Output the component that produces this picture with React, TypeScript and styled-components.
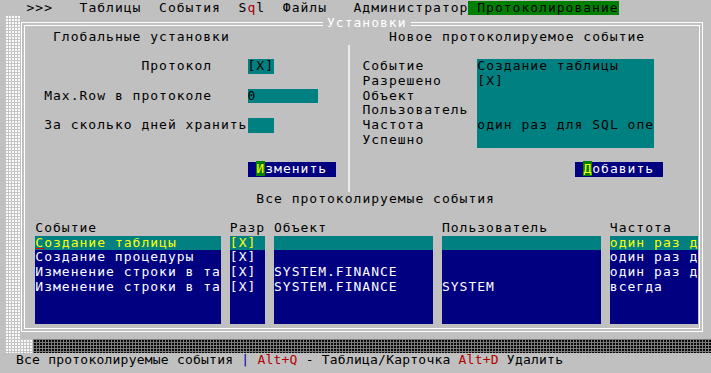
import React from "react";
import styled, { createGlobalStyle, css } from "styled-components";

// text-mode screen: every glyph sits in a cell of CW x RH pixels
const CW = 8.84;
const RH = 14.7;
const cols = (n: number) => `${(n * CW).toFixed(2)}px`;
const rows = (n: number) => `${(n * RH).toFixed(2)}px`;

const GlobalStyle = createGlobalStyle`
  html, body {
    margin: 0;
    padding: 0;
    background: #c0c0c0;
    overflow: hidden;
  }
`;

const lightDither = css`
  background-color: #fafafa;
  background-image: linear-gradient(to right, #c4c4c4 1px, transparent 1px),
    linear-gradient(to bottom, #c4c4c4 1px, transparent 1px);
  background-size: 3px 3px;
`;

const darkDither = css`
  background-color: #080808;
  background-image: linear-gradient(to right, #7c7c7c 1px, transparent 1px),
    linear-gradient(to bottom, #7c7c7c 1px, transparent 1px);
  background-size: 3px 3px;
`;

const Screen = styled.div`
  width: 711px;
  height: 373px;
  box-sizing: border-box;
  padding-top: 0.65px;
  background: #c0c0c0;
  color: #000;
  font-family: "DejaVu Sans Mono", "Liberation Mono", monospace;
  font-size: 13px;
  letter-spacing: 1.01px;
  line-height: ${RH}px;
  white-space: pre;
  overflow: hidden;
`;

const MenuBar = styled.div`
  display: flex;
  height: ${RH}px;
  padding-left: ${cols(3)};
`;

const MenuItem = styled.span<{ $gap: number; $active?: boolean }>`
  margin-right: ${(p) => cols(p.$gap)};
  ${(p) =>
    p.$active &&
    css`
      background: #008000;
    `}
`;

const Hot = styled.span`
  color: #a80000;
`;

const Desk = styled.div`
  display: flex;
  align-items: flex-start;
  height: ${(338.75 - 15.35).toFixed(2)}px;
`;

const SideShade = styled.div`
  align-self: stretch;
  width: 15px;
  margin-left: 5px;
  ${lightDither}
`;

const Window = styled.div`
  position: relative;
  width: 682px;
  box-sizing: border-box;
  margin: 6.65px 0 0 1px;
  border: 4px double #fff;
`;

const WindowTitle = styled.div`
  position: absolute;
  top: -10px;
  left: 298px;
  padding: 0 4px;
  background: #c0c0c0;
  color: #fff;
`;

const Content = styled.div`
  margin: 4.05px 0 0 1.52px;
  padding-bottom: 4.25px;
`;

const TopSection = styled.div`
  display: grid;
  grid-template-columns: ${cols(36)} ${cols(1)} 1fr;
  height: ${rows(11)};
`;

const Panel = styled.div`
  display: flex;
  flex-direction: column;
`;

const Line = styled.div<{ $indent?: number }>`
  height: ${RH}px;
  padding-left: ${(p) => cols(p.$indent ?? 0)};
  overflow: hidden;
`;

const FormRow = styled.div`
  display: flex;
  height: ${RH}px;
  margin-top: ${RH}px;
`;

const FormLabel = styled.div<{ $indent: number }>`
  width: ${cols(25)};
  box-sizing: border-box;
  padding-left: ${(p) => cols(p.$indent)};
`;

const Field = styled.div<{ $cols: number }>`
  width: ${(p) => cols(p.$cols)};
  background: #008080;
  overflow: hidden;
`;

const ButtonRow = styled.div<{ $indent: number; $skip: number }>`
  height: ${RH}px;
  margin-top: ${(p) => rows(p.$skip)};
  padding-left: ${(p) => cols(p.$indent)};
`;

const Button = styled.span`
  display: inline-block;
  width: ${cols(10)};
  background: #000080;
  color: #fff;
`;

const ButtonKey = styled.span`
  background: #008000;
  color: #ffff00;
`;

const Divider = styled.div`
  justify-self: center;
  width: 2px;
  margin-top: ${RH}px;
  background: #ececec;
`;

const Details = styled.div`
  display: flex;
  margin-top: ${RH}px;
`;

const DetailLabels = styled.div`
  width: ${cols(14)};
  box-sizing: border-box;
  padding-left: ${cols(1)};
`;

const DetailBox = styled.div`
  width: ${cols(20)};
  height: ${rows(6)};
  background: #008080;
`;

const Table = styled.div`
  display: flex;
  gap: ${cols(1)};
  margin-top: ${RH}px;
  padding-left: ${cols(1)};
`;

const Column = styled.div<{ $cols: number }>`
  width: ${(p) => cols(p.$cols)};
`;

const ColumnBody = styled.div`
  height: ${rows(6)};
  background: #000080;
  color: #fff;
`;

const Cell = styled.div<{ $selected?: boolean }>`
  height: ${RH}px;
  overflow: hidden;
  ${(p) =>
    p.$selected &&
    css`
      background: #008080;
      color: #ffff00;
    `}
`;

const Caret = styled.span`
  text-decoration: underline;
  text-decoration-color: #e00000;
  text-underline-offset: 1px;
`;

const ShadeRow = styled.div`
  display: flex;
  height: ${RH}px;
`;

const LightShade = styled.div`
  width: 28px;
  margin-left: 5px;
  ${lightDither}
`;

const DarkShade = styled.div`
  flex: 1;
  ${darkDither}
`;

const StatusBar = styled.div`
  height: ${RH}px;
  padding-left: 16px;
  letter-spacing: 0.22px;
`;

const StatusSep = styled.span`
  color: #0000a8;
`;

const StatusKey = styled.span`
  color: #b00000;
`;

type Row = string[];

const columns: { title: string; width: number }[] = [
  { title: "Событие", width: 21 },
  { title: "Разр", width: 4 },
  { title: "Объект", width: 18 },
  { title: "Пользователь", width: 18 },
  { title: "Частота", width: 10 },
];

const events: Row[] = [
  ["Создание таблицы", "[X]", "", "", "один раз д"],
  ["Создание процедуры", "[X]", "", "", "один раз д"],
  ["Изменение строки в та", "[X]", "SYSTEM.FINANCE", "", "один раз д"],
  ["Изменение строки в та", "[X]", "SYSTEM.FINANCE", "SYSTEM", "всегда"],
];

const detailLabels = ["Событие", "Разрешено", "Объект", "Пользователь", "Частота", "Успешно"];
const detailValues = ["Создание таблицы", "[X]", "", "", "один раз для SQL опе", ""];

const renderCell = (text: string, colIdx: number, rowIdx: number) => {
  if (rowIdx === 0 && colIdx === 0 && text) {
    return (
      <>
        <Caret>{text[0]}</Caret>
        {text.slice(1)}
      </>
    );
  }
  return text;
};

export default function App() {
  return (
    <>
      <GlobalStyle />
      <Screen>
        <MenuBar>
          <MenuItem $gap={3}>&gt;&gt;&gt;</MenuItem>
          <MenuItem $gap={2}>Таблицы</MenuItem>
          <MenuItem $gap={2}>События</MenuItem>
          <MenuItem $gap={2}>
            S<Hot>q</Hot>l
          </MenuItem>
          <MenuItem $gap={3}>Файлы</MenuItem>
          <MenuItem $gap={0}>Администратор</MenuItem>
          <MenuItem $gap={0} $active>
            {" Протоколирование"}
          </MenuItem>
        </MenuBar>

        <Desk>
          <SideShade />
          <Window>
            <WindowTitle>Установки</WindowTitle>
            <Content>
              <TopSection>
                <Panel>
                  <Line $indent={3}>Глобальные установки</Line>
                  <FormRow>
                    <FormLabel $indent={13}>Протокол</FormLabel>
                    <Field $cols={3}>[X]</Field>
                  </FormRow>
                  <FormRow>
                    <FormLabel $indent={2}>Max.Row в протоколе</FormLabel>
                    <Field $cols={8}>0</Field>
                  </FormRow>
                  <FormRow>
                    <FormLabel $indent={2}>За сколько дней хранить</FormLabel>
                    <Field $cols={3} />
                  </FormRow>
                  <ButtonRow $indent={25} $skip={2}>
                    <Button>
                      {" "}
                      <ButtonKey>И</ButtonKey>
                      {"зменить "}
                    </Button>
                  </ButtonRow>
                </Panel>

                <Divider />

                <Panel>
                  <Line $indent={4}>Новое протоколируемое событие</Line>
                  <Details>
                    <DetailLabels>
                      {detailLabels.map((l) => (
                        <Line key={l}>{l}</Line>
                      ))}
                    </DetailLabels>
                    <DetailBox>
                      {detailValues.map((v, i) => (
                        <Line key={i}>{v}</Line>
                      ))}
                    </DetailBox>
                  </Details>
                  <ButtonRow $indent={25} $skip={1}>
                    <Button>
                      {" "}
                      <ButtonKey>Д</ButtonKey>
                      {"обавить "}
                    </Button>
                  </ButtonRow>
                </Panel>
              </TopSection>

              <Line $indent={26}>Все протоколируемые события</Line>

              <Table>
                {columns.map((col, c) => (
                  <Column key={col.title} $cols={col.width}>
                    <Line>{col.title}</Line>
                    <ColumnBody>
                      {events.map((row, r) => (
                        <Cell key={r} $selected={r === 0}>
                          {renderCell(row[c], c, r)}
                        </Cell>
                      ))}
                    </ColumnBody>
                  </Column>
                ))}
              </Table>
            </Content>
          </Window>
        </Desk>

        <ShadeRow>
          <LightShade />
          <DarkShade />
        </ShadeRow>

        <StatusBar>
          Все протоколируемые события <StatusSep>|</StatusSep> <StatusKey>Alt+Q</StatusKey> - Таблица/Карточка{" "}
          <StatusKey>Alt+D</StatusKey> Удалить
        </StatusBar>
      </Screen>
    </>
  );
}
